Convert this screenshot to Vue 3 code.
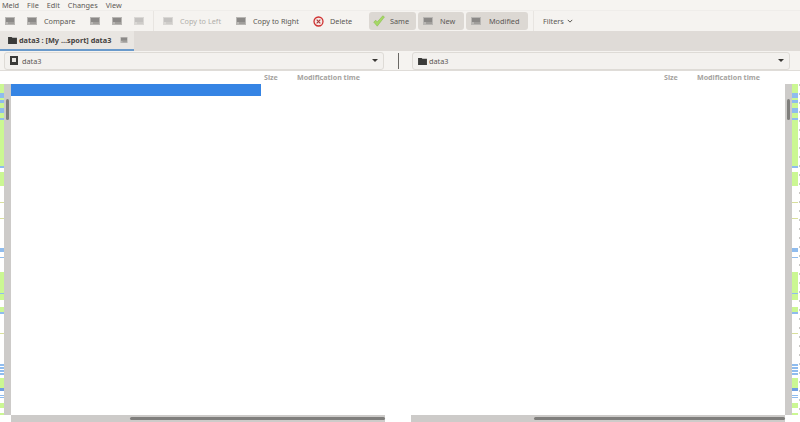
<template>
  <div class="window">
    <div class="menubar">
      <span v-for="m in menus" :key="m" class="menu-item">{{ m }}</span>
    </div>

    <div class="toolbar">
      <button class="tool first"><svg class="icon" viewBox="0 0 10 8"><use href="#missing" /></svg></button>
      <button class="tool compare"><svg class="icon" viewBox="0 0 10 8"><use href="#missing" /></svg><span>Compare</span></button>
      <button class="tool nav-a"><svg class="icon" viewBox="0 0 10 8"><use href="#missing" /></svg></button>
      <button class="tool nav-b"><svg class="icon" viewBox="0 0 10 8"><use href="#missing" /></svg></button>
      <button class="tool nav-b faded"><svg class="icon" viewBox="0 0 10 8"><use href="#missing" /></svg></button>
      <i class="sep sep-a"></i>
      <button class="tool copy-left faded"><svg class="icon" viewBox="0 0 10 8"><use href="#missing" /></svg><span>Copy to Left</span></button>
      <button class="tool copy-right"><svg class="icon" viewBox="0 0 10 8"><use href="#missing" /></svg><span>Copy to Right</span></button>
      <button class="tool delete">
        <svg class="icon-del" viewBox="0 0 12 12">
          <circle cx="6" cy="6" r="4.9" fill="#f7e9e6" stroke="#cf3030" stroke-width="1.4" />
          <path d="M4 4l4 4M8 4l-4 4" stroke="#a83a3a" stroke-width="1.2" />
        </svg>
        <span>Delete</span>
      </button>
      <div class="toggles">
        <button class="toggle same">
          <svg class="icon-check" viewBox="0 0 13 12">
            <path d="M.8 7.2L3 5.2L4.6 7L10.6 .4L12.4 1.6L4.6 11.6Z" fill="#a6d866" stroke="#86bd48" stroke-width=".6" />
          </svg>
          <span>Same</span>
        </button>
        <button class="toggle new"><svg class="icon" viewBox="0 0 10 8"><use href="#missing" /></svg><span>New</span></button>
        <button class="toggle modified"><svg class="icon" viewBox="0 0 10 8"><use href="#missing" /></svg><span>Modified</span></button>
      </div>
      <i class="sep sep-b"></i>
      <button class="tool filters">
        <span>Filters</span>
        <svg class="chev" viewBox="0 0 8 5"><path d="M1 1l3 3 3-3" fill="none" stroke="#55524e" stroke-width="1.3" /></svg>
      </button>
    </div>

    <div class="tabbar">
      <div class="tab">
        <svg class="folder" viewBox="0 0 10 9"><path d="M0 1h4l1 1h5v7H0z" fill="#3a3a38" /></svg>
        <span class="tab-label">data3 : [My ...sport] data3</span>
        <svg class="tab-close" viewBox="0 0 10 8"><use href="#missing" /></svg>
      </div>
    </div>

    <div class="choosers">
      <div class="combo combo-left">
        <svg class="doc" viewBox="0 0 8 9"><path d="M0 0h8v9H0z" fill="#3a3a38" /><path d="M2 2h4v4H2z" fill="#e8e6e2" /></svg>
        <span>data3</span>
        <i class="caret"></i>
      </div>
      <i class="divider"></i>
      <div class="combo combo-right">
        <svg class="folder" viewBox="0 0 10 9"><path d="M0 1h4l1 1h5v7H0z" fill="#3a3a38" /></svg>
        <span>data3</span>
        <i class="caret"></i>
      </div>
    </div>

    <div class="panes">
      <section class="pane pane-left">
        <div class="columns">
          <span class="col-size">Size</span>
          <span class="col-time">Modification time</span>
        </div>
        <div class="map">
          <i v-for="(s, i) in marks" :key="i" class="mark" :style="markStyle(s)"></i>
        </div>
        <div class="vscroll"><i class="vthumb"></i></div>
        <div class="tree"><div class="row-selected"></div></div>
        <div class="hscroll"><i class="hthumb"></i></div>
      </section>

      <section class="pane pane-right">
        <div class="columns">
          <span class="col-size">Size</span>
          <span class="col-time">Modification time</span>
        </div>
        <div class="tree"></div>
        <div class="vscroll"><i class="vthumb"></i></div>
        <div class="map">
          <i v-for="(s, i) in marks" :key="i" class="mark" :style="markStyle(s)"></i>
        </div>
        <div class="edge"></div>
        <div class="hscroll"><i class="hthumb"></i></div>
      </section>
    </div>

    <svg class="defs" width="0" height="0">
      <symbol id="missing" viewBox="0 0 10 8">
        <rect x="0" y="0" width="10" height="8" fill="#b8b6b3" />
        <rect x="1" y="1" width="8" height="4" fill="#8b8987" />
        <rect x="3" y="5" width="6" height="2" fill="#a09e9b" />
      </symbol>
    </svg>
  </div>
</template>

<script setup>
const menus = ['Meld', 'File', 'Edit', 'Changes', 'View'];

const GREEN = '#cbf793';
const BLUE = '#8fbcee';
const DEEP = '#6f9fe2';
const OLIVE = '#d8df9c';

// y position in the window, height, colour
const marks = [
  [84, 82, GREEN],
  [93, 5, BLUE],
  [100, 3, BLUE],
  [108, 5, BLUE],
  [118, 2, BLUE],
  [166, 2, BLUE],
  [172, 14, GREEN],
  [202, 1, OLIVE],
  [218, 1, OLIVE],
  [248, 4, BLUE],
  [257, 1, BLUE],
  [272, 28, GREEN],
  [293, 1, BLUE],
  [307, 5, GREEN],
  [312, 2, BLUE],
  [333, 1, OLIVE],
  [364, 2, BLUE],
  [367, 2, BLUE],
  [370, 2, BLUE],
  [373, 2, BLUE],
  [378, 10, GREEN],
  [388, 3, DEEP],
  [395, 1, BLUE],
  [397, 1, BLUE],
  [403, 5, GREEN],
  [413, 2, GREEN]
];

const markStyle = ([y, h, color]) => ({
  top: `${y - 84}px`,
  height: `${h}px`,
  background: color
});
</script>

<style>
html,
body {
  margin: 0;
  background: #fff;
}
</style>

<style scoped>
.window {
  width: 800px;
  height: 422px;
  display: flex;
  flex-direction: column;
  overflow: hidden;
  font-family: "Noto Sans", "Liberation Sans", sans-serif;
  font-size: 7.3px;
  color: #5a5753;
  background: #fff;
}

.menubar {
  height: 10px;
  display: flex;
  align-items: center;
  gap: 8px;
  padding-left: 2px;
  background: #f6f4f1;
  color: #5c5955;
}

.toolbar {
  height: 21px;
  display: flex;
  align-items: center;
  background: #f5f3f0;
  border-top: 1px solid #efedea;
  box-sizing: border-box;
}

.tool,
.toggle {
  display: flex;
  align-items: center;
  padding: 0;
  border: 0;
  background: none;
  font: inherit;
  color: inherit;
  white-space: nowrap;
  flex: none;
}

.icon {
  width: 10px;
  height: 8px;
  flex: none;
}

.first {
  margin-left: 5px;
}

.compare {
  margin-left: 12px;
  width: 48px;
  gap: 7px;
}

.nav-a {
  margin-left: 15px;
}

.nav-b {
  margin-left: 12px;
}

.faded {
  opacity: 0.45;
}

.sep {
  width: 1px;
  height: 20px;
  background: #e8e5e1;
  flex: none;
}

.sep-a {
  margin-left: 9px;
}

.copy-left {
  margin-left: 9px;
  width: 58px;
  gap: 7px;
}

.copy-right {
  margin-left: 15px;
  width: 62px;
  gap: 7px;
}

.delete {
  margin-left: 15px;
  width: 40px;
  gap: 6px;
}

.icon-del {
  width: 11px;
  height: 11px;
}

.toggles {
  display: flex;
  gap: 2px;
  margin-left: 16px;
}

.toggle {
  height: 18px;
  border-radius: 3px;
  background: #dcd8d3;
  box-sizing: border-box;
}

.same {
  width: 47px;
  padding-left: 4px;
  gap: 5px;
}

.new {
  width: 46px;
  padding-left: 5px;
  gap: 7px;
}

.modified {
  width: 62px;
  padding-left: 5px;
  gap: 8px;
}

.icon-check {
  width: 12px;
  height: 12px;
}

.sep-b {
  margin-left: 5px;
}

.filters {
  margin-left: 9px;
  gap: 3px;
}

.chev {
  width: 6px;
  height: 4px;
}

.tabbar {
  height: 20px;
  background: #dfdbd7;
  display: flex;
}

.tab {
  width: 134px;
  display: flex;
  align-items: center;
  padding-left: 8px;
  box-sizing: border-box;
  background: #e9e6e2;
  border-bottom: 2px solid #6a9acb;
}

.folder {
  width: 9px;
  height: 8px;
  flex: none;
}

.tab-label {
  margin-left: 2px;
  width: 101px;
  font-weight: 700;
  color: #45423f;
  white-space: nowrap;
}

.tab-close {
  width: 8px;
  height: 6px;
}

.choosers {
  height: 20px;
  display: flex;
  align-items: center;
  background: #f5f3f0;
  border-bottom: 1px solid #dfdcd8;
  box-sizing: border-box;
}

.combo {
  height: 18px;
  display: flex;
  align-items: center;
  box-sizing: border-box;
  border: 1px solid #dedbd6;
  border-radius: 3px;
  background: #f3f1ee;
  padding-left: 5px;
  gap: 4px;
}

.combo-left {
  width: 380px;
  margin-left: 4px;
}

.combo-right {
  width: 378px;
  margin-left: 13px;
  gap: 2px;
}

.doc {
  width: 8px;
  height: 9px;
}

.caret {
  margin-left: auto;
  margin-right: 5px;
  border-left: 3px solid transparent;
  border-right: 3px solid transparent;
  border-top: 3px solid #3a3835;
}

.divider {
  width: 1px;
  height: 16px;
  margin-left: 14px;
  background: #6a6864;
}

.panes {
  flex: 1;
  min-height: 0;
  display: flex;
}

.pane {
  display: grid;
  grid-template-rows: 13px 1fr 7px;
}

.pane-left {
  width: 411px;
  grid-template-columns: 4px 7px 374px 26px;
}

.pane-right {
  width: 389px;
  grid-template-columns: 374px 7px 6px 1px 1px;
}

.columns {
  grid-column: 1 / -1;
  position: relative;
  font-size: 7.1px;
  font-weight: 700;
  color: #a5a3a0;
  line-height: 12px;
}

.col-size,
.col-time {
  position: absolute;
  top: 0;
  white-space: nowrap;
}

.pane-left .col-size {
  left: 264px;
}

.pane-left .col-time {
  left: 297px;
}

.pane-right .col-size {
  left: 253px;
}

.pane-right .col-time {
  left: 286px;
}

.map {
  position: relative;
  background: #fff;
}

.mark {
  position: absolute;
  left: 0;
  right: 0;
}

.edge {
  grid-column: 5;
  background: repeating-linear-gradient(#c9c7c4 0 2px, #fff 2px 9px);
}

.vscroll {
  position: relative;
  background: #cdcbc9;
}

.vthumb {
  position: absolute;
  left: 2px;
  width: 3px;
  top: 15px;
  height: 21px;
  border-radius: 2px;
  background: #7f7e7c;
}

.tree {
  background: #fff;
}

.row-selected {
  width: 250px;
  height: 12px;
  background: #3584e4;
}

.hscroll {
  position: relative;
  background: #cdcbc9;
}

.pane-left .hscroll {
  grid-column: 3;
  grid-row: 3;
}

.pane-right .hscroll {
  grid-column: 1;
  grid-row: 3;
}

.hthumb {
  position: absolute;
  top: 2px;
  height: 3px;
  right: 0;
  border-radius: 2px;
  background: #7f7e7c;
}

.pane-left .hthumb {
  left: 119px;
}

.pane-right .hthumb {
  left: 123px;
}

.defs {
  position: absolute;
}
</style>
